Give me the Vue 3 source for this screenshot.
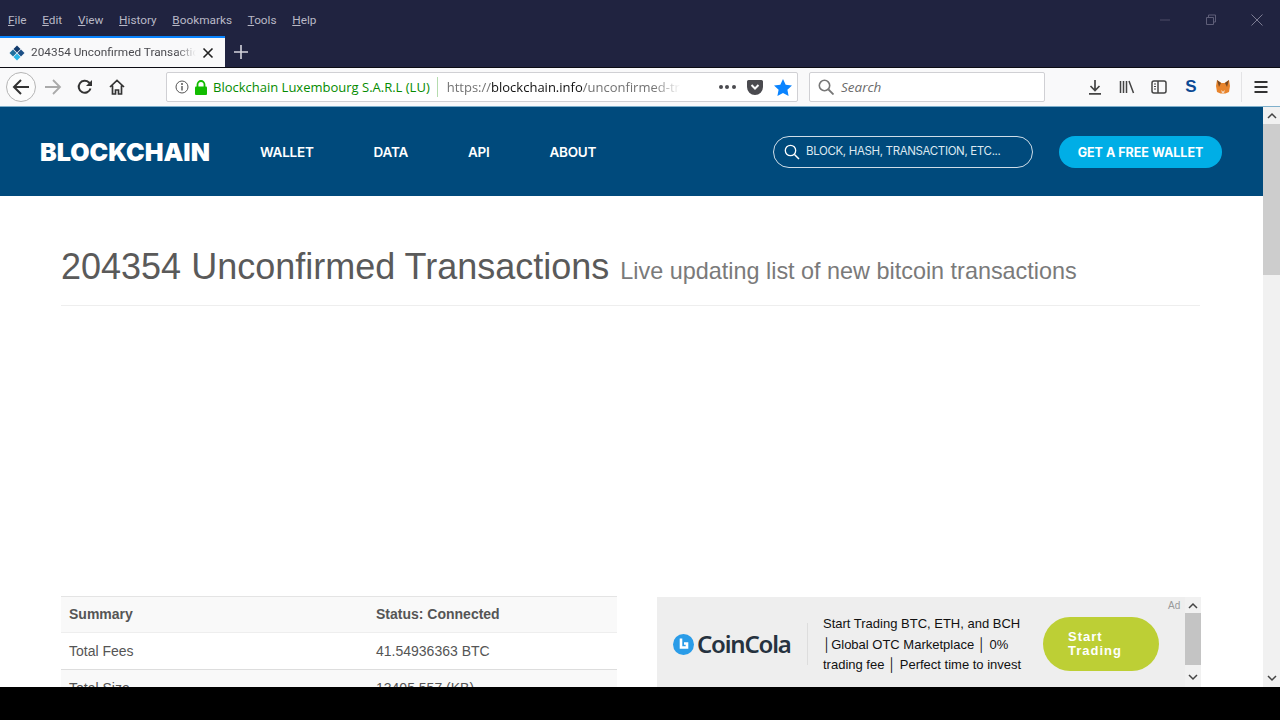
<script setup>
const menus = [
  { label: 'File', key: 'F', rest: 'ile' },
  { label: 'Edit', key: 'E', rest: 'dit' },
  { label: 'View', key: 'V', rest: 'iew' },
  { label: 'History', key: 'H', rest: 'istory' },
  { label: 'Bookmarks', key: 'B', rest: 'ookmarks' },
  { label: 'Tools', key: 'T', rest: 'ools' },
  { label: 'Help', key: 'H', rest: 'elp' }
]
const navs = ['WALLET', 'DATA', 'API', 'ABOUT']
const rows = [
  { a: 'Summary', b: 'Status: Connected', cls: 'head' },
  { a: 'Total Fees', b: '41.54936363 BTC', cls: 'fees' },
  { a: 'Total Size', b: '13405.557 (KB)', cls: 'alt' }
]
</script>

<template>
  <div class="screen">
    <div class="menubar">
      <div class="menus">
        <span v-for="m in menus" :key="m.label" class="menu"><u>{{ m.key }}</u>{{ m.rest }}</span>
      </div>
      <div class="winctl">
        <svg width="12" height="12" viewBox="0 0 12 12"><path d="M1 6h10" stroke="#4c4c66" fill="none"/></svg>
        <svg width="12" height="12" viewBox="0 0 12 12"><path d="M3.5 3V1h7v7H8.500M1.500 3.500h7v7h-7z" stroke="#5e5e78" fill="none"/></svg>
        <svg width="12" height="12" viewBox="0 0 12 12"><path d="M.5.500l11 11M11.500.500l-11 11" stroke="#7c7c92" fill="none"/></svg>
      </div>
    </div>

    <div class="tabbar">
      <div class="tab">
        <svg class="favicon" width="16" height="16" viewBox="0 0 16 16">
          <path d="M8 0.500 11.500 4 8 7.500 4.500 4z" fill="#123b6d"/>
          <path d="M4 4.500 7.500 8 4 11.500 0.500 8z" fill="#1f6f9e"/>
          <path d="M12 4.500 15.500 8 12 11.500 8.500 8z" fill="#1c4f86"/>
          <path d="M8 8.500 11.500 12 8 15.500 4.500 12z" fill="#29b6e8"/>
        </svg>
        <span class="tabtitle">204354 Unconfirmed Transactions</span>
        <svg width="12" height="12" viewBox="0 0 12 12"><path d="M1.500 1.500l9 9M10.500 1.500l-9 9" stroke="#222" stroke-width="1.600" fill="none"/></svg>
      </div>
      <svg class="plus" width="14" height="14" viewBox="0 0 14 14"><path d="M7 0v14M0 7h14" stroke="#d4d4dc" stroke-width="1.600" fill="none"/></svg>
    </div>

    <div class="toolbar">
      <div class="back">
        <svg width="18" height="18" viewBox="0 0 18 18"><path d="M17 9H2M9 2 2 9l7 7" stroke="#333" stroke-width="2" fill="none"/></svg>
      </div>
      <svg class="fwd" width="18" height="18" viewBox="0 0 18 18"><path d="M1 9h15M9 2l7 7-7 7" stroke="#aaa" stroke-width="1.800" fill="none"/></svg>
      <svg class="reload" width="16" height="16" viewBox="0 0 16 16"><path d="M13.500 9.500A6 6 0 1 1 12 3.500L14 5.500" stroke="#333" stroke-width="2" fill="none"/><path d="M15 1v6H9z" fill="#333"/></svg>
      <svg class="home" width="16" height="16" viewBox="0 0 16 16"><path d="M1 8 8 1.500 15 8M3.500 6.500V15h3v-4h3v4h3V6.500" stroke="#333" stroke-width="1.700" fill="none"/></svg>

      <div class="urlbar">
        <svg class="info" width="14" height="14" viewBox="0 0 14 14"><circle cx="7" cy="7" r="6" stroke="#555" fill="none"/><path d="M7 6v4.500" stroke="#555" stroke-width="1.400"/><circle cx="7" cy="4" r="1" fill="#555"/></svg>
        <svg class="lock" width="14" height="15" viewBox="0 0 14 15"><path d="M3.500 7V4.500a3.500 3.500 0 0 1 7 0V7" stroke="#12bc00" stroke-width="1.800" fill="none"/><rect x="1" y="6.500" width="12" height="8.500" rx="1" fill="#12bc00"/></svg>
        <span class="org">Blockchain Luxembourg S.A.R.L (LU)</span>
        <span class="urlsep"></span>
        <span class="url"><span class="dim">https://</span><span class="dark">blockchain.info</span><span class="dim">/unconfirmed-tr</span></span>
        <span class="dots"><i></i><i></i><i></i></span>
        <svg class="pocket" width="16" height="15" viewBox="0 0 16 15"><path d="M1.500 0h13A1.500 1.500 0 0 1 16 1.500V7A8 8 0 0 1 0 7V1.500A1.500 1.500 0 0 1 1.500 0z" fill="#4a4a4f"/><path d="M4.500 5 8 8.500 11.500 5" stroke="#f9f9fa" stroke-width="2" fill="none"/></svg>
        <svg class="star" width="18" height="17" viewBox="0 0 18 17"><path d="M9 0l2.700 5.700 6.300.8-4.600 4.300 1.200 6.200L9 14l-5.600 3 1.200-6.200L0 6.500l6.300-.8z" fill="#0a84ff"/></svg>
      </div>

      <div class="searchbar">
        <svg width="16" height="16" viewBox="0 0 16 16"><circle cx="6.500" cy="6.500" r="5.200" stroke="#777" stroke-width="1.600" fill="none"/><path d="M10.500 10.500 15.500 15.500" stroke="#777" stroke-width="1.800"/></svg>
        <span>Search</span>
      </div>

      <div class="tools">
        <svg width="16" height="16" viewBox="0 0 16 16"><path d="M8 1v10M3.500 7 8 11.500 12.500 7M2 14.800h12" stroke="#444" stroke-width="1.700" fill="none"/></svg>
        <svg width="16" height="16" viewBox="0 0 16 16"><path d="M1.500 2v12M4.500 2v12M7.500 2v12M10 2l4.500 12" stroke="#444" stroke-width="1.500" fill="none"/></svg>
        <svg width="16" height="16" viewBox="0 0 16 16"><rect x="1" y="2" width="14" height="12" rx="2" stroke="#444" stroke-width="1.500" fill="none"/><path d="M7 2v12" stroke="#444" stroke-width="1.500"/><path d="M3 5h2M3 7.500h2M3 10h2" stroke="#444"/></svg>
        <span class="sicon">S</span>
        <svg width="16" height="16" viewBox="0 0 16 16"><path d="M2 1l4.500 3h3L14 1l1 6-1 6-3.500 1.500h-5L2 13 1 7z" fill="#e8842c"/><path d="M2 1l4 3-2 4zM14 1l-4 3 2 4z" fill="#7a4a22"/><path d="M6 11l2 1.500 2-1.500-1 3H7z" fill="#f3d4b8"/></svg>
        <span class="toolsep"></span>
        <svg width="16" height="16" viewBox="0 0 16 16"><path d="M1.500 3h13M1.500 8h13M1.500 13h13" stroke="#333" stroke-width="1.800" fill="none"/></svg>
      </div>
    </div>

    <div class="viewport">
      <main class="page">
        <header class="site">
          <span class="logo">BLOCKCHAIN</span>
          <nav class="nav"><a v-for="n in navs" :key="n">{{ n }}</a></nav>
          <div class="sitesearch">
            <svg width="16" height="16" viewBox="0 0 16 16"><circle cx="6.500" cy="6.500" r="5.200" stroke="#fff" stroke-width="1.300" fill="none"/><path d="M10.500 10.500 15 15" stroke="#fff" stroke-width="1.500"/></svg>
            <span>BLOCK, HASH, TRANSACTION, ETC...</span>
          </div>
          <button class="cta">GET A FREE WALLET</button>
        </header>

        <div class="container">
          <h1>204354 Unconfirmed Transactions <small>Live updating list of new bitcoin transactions</small></h1>
          <div class="columns">
            <table class="summary">
              <tbody>
                <tr v-for="r in rows" :key="r.a" :class="r.cls">
                  <td class="c1">{{ r.a }}</td>
                  <td>{{ r.b }}</td>
                </tr>
              </tbody>
            </table>
            <aside class="ad">
              <div class="brand">
                <svg width="21" height="21" viewBox="0 0 21 21"><circle cx="10.500" cy="10.500" r="10.500" fill="#2a9ce8"/><path d="M8 4.500v9h6v-4h-3" stroke="#fff" stroke-width="2.600" fill="none"/></svg>
                <span>CoinCola</span>
              </div>
              <p class="adtext">Start Trading BTC, ETH, and BCH<br>│Global OTC Marketplace │ 0%<br>trading fee │ Perfect time to invest</p>
              <button class="adbtn">Start<br>Trading</button>
              <div class="adscroll">
                <span class="adlabel">Ad</span>
                <div class="adbar">
                  <svg width="10" height="7" viewBox="0 0 10 7"><path d="M1 6l4-4 4 4" stroke="#444" stroke-width="1.500" fill="none"/></svg>
                  <div class="adthumb"></div>
                  <svg class="adlast" width="10" height="7" viewBox="0 0 10 7"><path d="M1 1l4 4 4-4" stroke="#444" stroke-width="1.500" fill="none"/></svg>
                </div>
              </div>
            </aside>
          </div>
        </div>
      </main>
      <div class="scrollbar">
        <svg class="arrow" width="10" height="7" viewBox="0 0 10 7"><path d="M1 6l4-4 4 4" stroke="#444" stroke-width="1.500" fill="none"/></svg>
        <div class="thumb"></div>
        <svg class="arrow bottom" width="10" height="7" viewBox="0 0 10 7"><path d="M1 1l4 4 4-4" stroke="#444" stroke-width="1.500" fill="none"/></svg>
      </div>
    </div>
    <div class="blackbar"></div>
  </div>
</template>

<style>
html, body { margin: 0; background: #000; overflow: hidden; }
</style>

<style scoped>
.screen { width: 1280px; height: 720px; display: flex; flex-direction: column; overflow: hidden; font-family: "Open Sans", "Noto Sans", sans-serif; }
.menubar { height: 36px; background: #202340; display: flex; justify-content: space-between; align-items: center; flex: none; padding: 4px 17px 0 8px; box-sizing: border-box; }
.menus { display: flex; gap: 15.700px; font: 400 11.800px/1.200 Roboto, sans-serif; color: #b9b9c6; }
.menu u { text-underline-offset: 1px; }
.winctl { display: flex; gap: 34px; margin-top: -1px; }
.tabbar { height: 31px; background: #202340; display: flex; align-items: center; flex: none; }
.tab { width: 225px; height: 31px; box-sizing: border-box; border-top: 2px solid #0a84ff; background: #f9f9fa; display: flex; align-items: center; padding: 0 11px 0 9px; gap: 6px; }
.favicon { flex: none; }
.tabtitle { flex: 1; min-width: 0; font: 400 11.800px/1.300 Roboto, sans-serif; color: #4a4a4f; white-space: nowrap; overflow: hidden; -webkit-mask-image: linear-gradient(to right, #000 88%, transparent); mask-image: linear-gradient(to right, #000 88%, transparent); }
.plus { margin-left: 9px; }
.toolbar { height: 38px; background: #f9f9fa; display: flex; align-items: center; flex: none; border-top: 1px solid #0c0c14; border-bottom: 1px solid #7fb0cc; padding-left: 6px; }
.back { width: 30px; height: 30px; box-sizing: border-box; border: 1px solid #b5b5b5; border-radius: 50%; background: #fcfcfc; display: flex; align-items: center; justify-content: center; flex: none; }
.fwd { margin-left: 8px; }
.reload { margin-left: 15px; }
.home { margin-left: 16px; }
.urlbar { margin-left: 41px; width: 632px; height: 30px; box-sizing: border-box; background: #fff; border: 1px solid #d0d0d4; border-radius: 2px; display: flex; align-items: center; padding-left: 8px; flex: none; }
.lock { margin-left: 5px; }
.org { margin-left: 5px; font-size: 13px; color: #058b00; white-space: nowrap; }
.urlsep { width: 1px; height: 20px; background: #b5dcae; margin-left: 7px; }
.url { margin-left: 9px; width: 234px; font-size: 13px; white-space: nowrap; overflow: hidden; -webkit-mask-image: linear-gradient(to right, #000 88%, transparent); mask-image: linear-gradient(to right, #000 88%, transparent); }
.dim { color: #737373; }
.dark { color: #111; }
.dots { display: flex; gap: 2.500px; margin-left: 38px; }
.dots i { width: 4px; height: 4px; border-radius: 50%; background: #4a4a4f; }
.pocket { margin-left: 11px; }
.star { margin-left: 11px; }
.searchbar { margin-left: 11px; width: 236px; height: 30px; box-sizing: border-box; background: #fff; border: 1px solid #d0d0d4; border-radius: 2px; display: flex; align-items: center; padding-left: 8px; gap: 7px; font-size: 13.500px; font-style: italic; color: #6b6b6b; flex: none; }
.tools { margin-left: 42px; display: flex; align-items: center; gap: 16px; }
.sicon { width: 16px; text-align: center; font: 900 17px/16px "Liberation Sans", sans-serif; color: #0c4a94; }
.toolsep { width: 1px; height: 30px; background: #e4e4e6; margin: 0 -5px 0 -6px; }
.viewport { flex: 1; min-height: 0; display: flex; background: #fff; }
.page { width: 1263px; overflow: hidden; flex: none; height: 100%; }
.site { height: 89px; background: #004a7c; display: flex; align-items: center; padding: 1px 0 0 40px; box-sizing: border-box; }
.logo { font: 900 25px/1 Inter, sans-serif; color: #fff; width: 171px; margin-top: 1px; white-space: nowrap; }
.nav { display: flex; gap: 60px; margin: 1px 0 0 49px; font: 600 13.500px/1 Inter, sans-serif; letter-spacing: -0.250px; color: #fff; width: 513px; }
.sitesearch { width: 260px; height: 32px; box-sizing: border-box; border: 1px solid #cfdde8; border-radius: 16px; display: flex; align-items: center; padding-left: 10px; gap: 6px; font: 400 11.500px/1 Inter, sans-serif; letter-spacing: -0.350px; color: #dde8f0; white-space: nowrap; }
.cta { margin-left: 26px; width: 163px; height: 32px; border: none; border-radius: 16px; background: #00aee6; color: #fff; font: 700 12.500px/1 Inter, sans-serif; padding: 3px 0 0; }
.container { padding: 0 63px 0 61px; font-family: "Liberation Sans", sans-serif; }
h1 { margin: 0; padding: 48px 0 16px; height: 110px; box-sizing: border-box; border-bottom: 1px solid #eee; font-size: 36px; font-weight: 400; line-height: 45px; color: #5a5a5a; white-space: nowrap; }
h1 small { font-size: 23.400px; color: #7a7a7a; margin-left: 1px; }
.columns { margin-top: 290px; display: flex; justify-content: space-between; align-items: flex-start; }
.summary { width: 556px; border-collapse: collapse; font-size: 14px; color: #555; border-top: 1px solid #e4e4e4; }
.summary td { height: 35px; padding: 0 8px; border-bottom: 1px solid #ddd; }
.summary .c1 { width: 291px; }
.summary .head { background: #f9f9f9; font-weight: 700; }
.summary .head td { height: 33px; padding-bottom: 2px; border-bottom-color: #eee; }
.summary .fees td { height: 36px; }
.summary .alt { background: #f9f9f9; }
.ad { width: 544px; height: 90px; margin: 1px -1px 0 0; background: #eee; display: flex; align-items: flex-start; font-family: "Liberation Sans", sans-serif; flex: none; }
.brand { display: flex; align-items: center; gap: 3px; width: 151px; height: 42px; margin-top: 26px; padding-left: 16px; box-sizing: border-box; border-right: 1px solid #ddd; font: 600 24px/1 "Noto Sans", sans-serif; letter-spacing: -1.200px; color: #26323f; flex: none; }
.adtext { margin: 0 0 0 15px; padding-top: 17px; width: 210px; font-size: 13px; line-height: 20.500px; color: #111; white-space: nowrap; flex: none; }
.adbtn { margin: 20px 0 0 10px; width: 116px; height: 54px; border: none; border-radius: 27px; background: #bdcf35; color: #fff; font: 700 13px/14.500px "Liberation Sans", sans-serif; letter-spacing: 1px; text-align: left; padding: 0 0 0 25px; flex: none; }
.adscroll { margin-left: 9px; width: 33px; height: 90px; display: flex; flex: none; }
.adlabel { width: 17px; font-size: 10px; line-height: 17px; color: #999; }
.adbar { width: 16px; height: 90px; display: flex; flex-direction: column; align-items: center; background: #f1f1f1; }
.adbar svg { flex: none; margin: 5px 0 4px; }
.adbar .adlast { margin-top: 9px; }
.adthumb { width: 16px; height: 52px; background: #c4c4c4; }
.scrollbar { width: 17px; background: #f1f1f1; display: flex; flex-direction: column; align-items: center; flex: none; }
.arrow { margin: 5px 0; flex: none; }
.thumb { width: 17px; height: 151px; background: #cdcdcd; }
.bottom { margin-top: auto; }
.blackbar { height: 33px; background: #000; flex: none; }
</style>
